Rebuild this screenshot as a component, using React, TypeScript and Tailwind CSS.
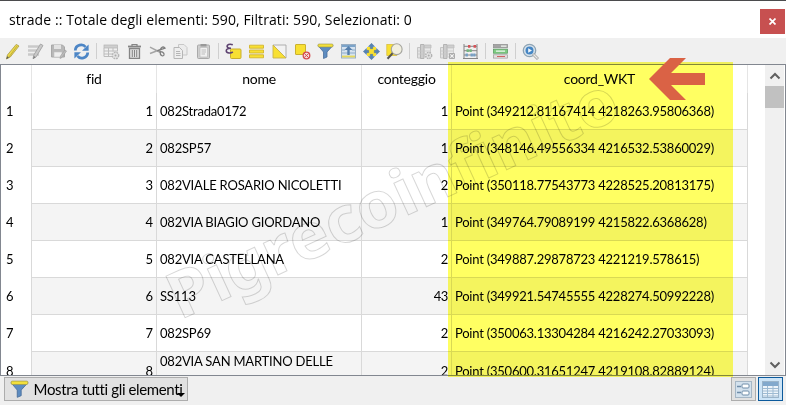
import type { ReactNode } from "react";

const rows = [
  ["1", "082Strada0172", "1", "Point (349212.81167414 4218263.95806368)"],
  ["2", "082SP57", "1", "Point (348146.49556334 4216532.53860029)"],
  ["3", "082VIALE ROSARIO NICOLETTI", "2", "Point (350118.77543773 4228525.20813175)"],
  ["4", "082VIA BIAGIO GIORDANO", "1", "Point (349764.79089199 4215822.6368628)"],
  ["5", "082VIA CASTELLANA", "2", "Point (349887.29878723 4221219.578615)"],
  ["6", "SS113", "43", "Point (349921.54745555 4228274.50992228)"],
  ["7", "082SP69", "2", "Point (350063.13304284 4216242.27033093)"],
  ["8", "082VIA SAN MARTINO DELLE", "2", "Point (350600.31651247 4219108.82889124)"],
];

function Ico({ children }: { children: ReactNode }) {
  return (
    <span className="flex w-[23px] shrink-0 justify-center">
      <svg width="17" height="17" viewBox="0 0 17 17" fill="none">{children}</svg>
    </span>
  );
}

const Sep = () => (
  <span className="flex w-[7px] shrink-0 justify-center">
    <span className="h-4 w-px bg-[#cfcfcf]" />
  </span>
);

const Funnel = () => (
  <>
    <path d="M1 2.5 L6.5 9 V15.5 L10 14 V9 L16 2.5Z" fill="#5d8cc0" stroke="#4a6f9c" strokeWidth=".8" />
    <rect x="1" y="1" width="15" height="3" rx="1" fill="#f3e03b" stroke="#9a9548" strokeWidth=".6" />
  </>
);

const FieldTable = () => (
  <>
    <path d="M1.5 4.5H7V15H1.5Z" fill="#e2e2e2" stroke="#c4c4c4" />
    <path d="M4.5 1.5H8V15.5H4.5Z" fill="#cdcdcd" stroke="#b4b4b4" />
    <path d="M8.5 2H15V5H8.5Z" fill="#cfcfcf" stroke="#bbb" strokeWidth=".8" />
    <path d="M8.5 5H14.5V14H8.5Z" fill="#e9e9e9" stroke="#c6c6c6" strokeWidth=".8" />
    <path d="M2 8H14M2 11H14" stroke="#c6c6c6" strokeWidth=".8" />
  </>
);

function Toolbar() {
  return (
    <div className="flex h-[26px] shrink-0 items-center bg-[#f0f0f0] pl-[1px]">
      <Ico>
        <path d="M12.2 1.4 L15 3 L6.3 14 L2.5 16 L3.4 12Z" fill="#ecd949" stroke="#a99b45" strokeWidth=".8" />
        <path d="M13.2 2.8L5 14" stroke="#b5a339" strokeWidth=".8" />
        <path d="M2.2 16.2L3.2 13.2L5 14.6Z" fill="#5e5e55" />
      </Ico>
      <Ico>
        <path d="M1 3.5H12M1 7.5H12M1 11.5H12" stroke="#c9c9c9" strokeWidth="2.6" />
        <path d="M13.5 1L16 2.5L9 14L6 15.7L6.8 12Z" fill="#c9c9c9" stroke="#9a9a9a" strokeWidth=".8" />
        <path d="M6 16L7 13L8.4 14.2Z" fill="#777" />
      </Ico>
      <Ico>
        <path d="M1.5 2H12.5L14.5 4V14H1.5Z" fill="#b8b8b8" stroke="#a8a8a8" />
        <path d="M4 2H11V6H4Z" fill="#e3e3e3" />
        <path d="M4 9H12V14H4Z" fill="#eeeeee" stroke="#c5c5c5" strokeWidth=".6" />
        <path d="M15 7L16.5 8L12 14.5L10 15.5L10.5 13Z" fill="#bcbcbc" stroke="#9c9c9c" strokeWidth=".6" />
      </Ico>
      <Ico>
        <path d="M2.3 7.5C2.5 1.5 10 .5 12.5 4" stroke="#4d86c6" strokeWidth="2.8" />
        <path d="M15.6 1.4V7.7H9Z" fill="#4d86c6" />
        <path d="M14.7 9.5C14.5 15.5 7 16.5 4.5 13" stroke="#4d86c6" strokeWidth="2.8" />
        <path d="M1.4 15.6V9.3H8Z" fill="#4d86c6" />
      </Ico>
      <Sep />
      <Ico>
        <rect x="1" y="2" width="13.5" height="3" fill="#cfcfcf" stroke="#b3b3b3" strokeWidth=".7" />
        <path d="M1 5V13.5H9M1 8H14M1 11H9M5.5 5V13.5M10 5V8.5M14.5 5V8.5" stroke="#bcbcbc" />
        <circle cx="12.5" cy="12.5" r="3.2" fill="#e3e3e3" stroke="#b5b5b5" strokeWidth="1.4" strokeDasharray="1.8 .8" />
        <circle cx="12.5" cy="12.5" r="1" fill="#aaa" />
      </Ico>
      <Ico>
        <path d="M6 3V1.5H11V3" stroke="#858585" strokeWidth="1.2" />
        <path d="M2 3.5H15" stroke="#858585" strokeWidth="1.8" />
        <path d="M3.5 5.5H13.5V15.3H3.5Z" fill="#e1e1e1" stroke="#858585" strokeWidth="1.3" />
        <path d="M6.3 7V14M8.5 7V14M10.7 7V14" stroke="#858585" />
      </Ico>
      <Ico>
        <path d="M1 4.2L11.5 9.5M1 10.5L11.5 6.5" stroke="#a5a5a5" strokeWidth="1.5" />
        <path d="M8 8L16 5.2C14.5 2.8 12 4.4 11.3 6.8M10.5 8.8C12 8.2 15.6 9.2 15 12C13.6 14 11 12.2 11.2 9.2" stroke="#7e7e7e" strokeWidth="1.3" />
      </Ico>
      <Ico>
        <path d="M6.5 1.5H12L15 4.5V12H6.5Z" fill="#ececec" stroke="#c8c8c8" />
        <path d="M2 4.5H7.5L10.5 7.5V15.5H2Z" fill="#eeeeee" stroke="#b6b6b6" />
        <path d="M4 8.5H8M4 10.5H8.5M4 12.5H8.5" stroke="#b5b5b5" />
      </Ico>
      <Ico>
        <rect x="2.5" y="2" width="12" height="13.5" rx="1" fill="#cfcfcf" stroke="#aaa" />
        <path d="M5 4.5H12.5V14H5Z" fill="#f0f0f0" stroke="#b5b5b5" strokeWidth=".6" />
        <rect x="5.5" y="1" width="6" height="2.5" fill="#999" />
        <path d="M6.5 7H11M6.5 9H11M6.5 11H10" stroke="#bdbdbd" />
      </Ico>
      <Sep />
      <Ico>
        <rect x="5.5" y="6" width="10.5" height="9.5" rx="1" fill="#f8e032" stroke="#c9ae2e" />
        <path d="M7.8 1.8C4.5 .5 1.7 1.8 2.2 3.7C2.5 5.2 4.7 5.2 6 5.2C3.3 5.2 1 6 1.3 8.1C1.6 10.5 6 10.6 7.8 8.9" stroke="#5d4270" strokeWidth="1.6" />
      </Ico>
      <Ico>
        <path d="M1.5 2.2H15.5V5.2H1.5ZM1.5 7H15.5V10H1.5ZM1.5 11.8H15.5V14.8H1.5Z" fill="#f8e032" stroke="#d2b42d" strokeWidth=".9" />
      </Ico>
      <Ico>
        <path d="M2 2H15V15Z" fill="#f2f2f2" stroke="#a6a6a6" strokeWidth=".9" />
        <path d="M2 2V15H15Z" fill="#f8e032" stroke="#c7b24d" strokeWidth=".9" />
      </Ico>
      <Ico>
        <rect x="1.5" y="1.5" width="10" height="10" rx=".5" fill="#f8e032" stroke="#cbb12e" />
        <circle cx="12.5" cy="12.5" r="3.3" fill="#f5dddd" stroke="#d44d50" strokeWidth="1.3" />
        <path d="M10.2 10.3L14.8 14.8M10.3 14.4L14.6 10.6" stroke="#d44d50" />
      </Ico>
      <Ico><Funnel /></Ico>
      <Ico>
        <rect x="1.5" y="1.5" width="14" height="13.5" fill="#d5e2ef" stroke="#98adc2" />
        <path d="M2 3H15" stroke="#7ba3c9" strokeWidth="2" />
        <path d="M2 13.5H15" stroke="#e6d95a" strokeWidth="1.8" />
        <path d="M2 7H5M12 7H15M2 10H15" stroke="#8cabc9" strokeWidth="1" />
        <path d="M8.5 3L12.5 7H9.7V12H7.3V7H4.5Z" fill="#557fad" />
      </Ico>
      <Ico>
        <rect x="4" y="4" width="9" height="9" fill="#f8e032" />
        <path d="M8.5 .3L11.6 3.5H9.7V5.7H7.3V3.5H5.4ZM8.5 16.7L5.4 13.5H7.3V11.3H9.7V13.5H11.6ZM.3 8.5L3.5 5.4V7.3H5.7V9.7H3.5V11.6ZM16.7 8.5L13.5 11.6V9.7H11.3V7.3H13.5V5.4Z" fill="#5583b4" stroke="#406a97" strokeWidth=".4" />
      </Ico>
      <Ico>
        <rect x=".8" y="1.5" width="10" height="11" fill="#f8e032" stroke="#d6ba35" strokeWidth=".7" />
        <circle cx="10.7" cy="6.2" r="5.4" fill="#f1efdf" stroke="#a4a49e" strokeWidth="1.1" />
        <path d="M6.6 10.2L1.5 15.7" stroke="#555" strokeWidth="2" />
      </Ico>
      <Sep />
      <Ico>
        <FieldTable />
        <circle cx="12.7" cy="12.5" r="3" fill="#e5e5e5" stroke="#b2b2b2" strokeWidth="1.4" strokeDasharray="1.6 .8" />
        <circle cx="12.7" cy="12.5" r="1" fill="#aaa" />
      </Ico>
      <Ico>
        <FieldTable />
        <rect x="10" y="10" width="6" height="6" rx="1" fill="#aaa" />
        <path d="M11.3 11.3L14.7 14.7M14.7 11.3L11.3 14.7" stroke="#f5f5f5" strokeWidth="1.1" />
      </Ico>
      <Ico>
        <path d="M2 1V16M15 1V16M1 15.5H16M2 3.3H15M2 7.7H15M2 12H15" stroke="#858585" />
        <path d="M6 3.3H8.4M11.5 3.3H14" stroke="#d55357" strokeWidth="2.8" />
        <path d="M4.5 7.7H10" stroke="#74b47e" strokeWidth="2.8" strokeDasharray="2.4 .5" />
        <path d="M3.5 12H6M8.5 12H13.5" stroke="#779fc4" strokeWidth="2.8" strokeDasharray="2.4 .3" />
      </Ico>
      <Sep />
      <Ico>
        <rect x="1.5" y="1.5" width="14" height="3.3" fill="#a4a4a4" stroke="#8c8c8c" strokeWidth=".7" />
        <rect x="1.5" y="6.2" width="14" height="4" fill="#7fcc83" stroke="#5b9f61" strokeWidth=".8" />
        <rect x="1.5" y="11.8" width="14" height="3.3" fill="#e7dede" stroke="#999" strokeWidth=".7" />
        <path d="M9 3.2H14.5M4 8.2H13" stroke="#f0f6f0" strokeWidth="1.3" />
        <path d="M5 13.5H13" stroke="#cf6264" />
      </Ico>
      <Sep />
      <Ico>
        <circle cx="7.5" cy="7.5" r="6.2" fill="#d9e4ec" stroke="#8da3b4" strokeWidth="1.3" />
        <circle cx="7.5" cy="7.5" r="4" fill="#4686c4" />
        <path d="M6.2 5.3L10 7.5L6.2 9.7Z" fill="#f3f7fa" />
        <path d="M11 11L16 16" stroke="#a6a6a6" strokeWidth="3" />
        <path d="M11.5 11.5L15.5 15.5" stroke="#e9e9e9" strokeWidth="1.2" />
      </Ico>
    </div>
  );
}

export default function App() {
  return (
    <div className="relative flex h-[405px] w-[786px] flex-col overflow-hidden bg-[#f0f0f0] font-[Lato,sans-serif] text-black">
      <div className="flex h-[38px] shrink-0 items-start justify-between border-t border-[#4b4b4d] bg-white pl-[9px] pr-[1px]">
        <span className="whitespace-pre pt-[8px] font-['Open_Sans',sans-serif] text-[14px] leading-[22px] tracking-[0.1px]">strade :: Totale degli elementi: 590, Filtrati: 590, Selezionati: 0</span>
        <span className="mt-[8px] flex h-[25px] w-[25px] items-center justify-center bg-[#c75050]">
          <svg width="7" height="7" viewBox="0 0 7 7"><path d="M.5 .5L6.5 6.5M6.5 .5L.5 6.5" stroke="white" strokeWidth="1.7" /></svg>
        </span>
      </div>
      <Toolbar />
      <div className="flex h-[312px] shrink-0 overflow-hidden border border-[#828790] bg-white text-[13px]">
        <div className="w-[764px] shrink-0">
          <div className="flex h-[28px] w-[747px] text-center text-[14px] leading-[27px] tracking-[-0.25px]">
            <div className="w-[31px] border-r border-[#e5e5e5]" />
            <div className="w-[125px] border-r border-[#e5e5e5]">fid</div>
            <div className="w-[205px] border-r border-[#e5e5e5]">nome</div>
            <div className="w-[90px] border-r border-[#e5e5e5]">conteggio</div>
            <div className="flex-1 border-r border-[#e5e5e5]">coord_WKT</div>
          </div>
          {rows.map(([id, name, count, point], i) => (
            <div key={id} className={`flex h-[37px] w-[747px] ${i === 7 ? "leading-[38px]" : "leading-[37px]"} ${i % 2 ? "bg-[#f4f4f4]" : "bg-white"}`}>
              <div className="w-[31px] border-r border-[#d9d9d9] bg-white pl-[5px]">{id}</div>
              <div className="w-[125px] border-r border-b border-[#d9d9d9] pr-[3px] text-right">{id}</div>
              <div className={`w-[205px] whitespace-nowrap border-r border-b border-[#d9d9d9] pl-[3px] tracking-[-0.2px] ${i === 7 ? "leading-[18px]" : ""}`}>{name}</div>
              <div className="w-[90px] border-r border-b border-[#d9d9d9] pr-[3px] text-right tracking-[-0.4px]">{count}</div>
              <div className="flex-1 whitespace-nowrap border-r border-b border-[#d9d9d9] pl-[3px] tracking-[-0.23px]">{point}</div>
            </div>
          ))}
        </div>
        <div className="flex w-[19px] shrink-0 flex-col items-center bg-[#f0f0f0]">
          <div className="flex h-[21px] items-center"><svg width="12" height="8" viewBox="0 0 12 8"><path d="M1.5 6.5L6 2L10.5 6.5" fill="none" stroke="#606060" strokeWidth="2" /></svg></div>
          <div className="h-[22px] w-full bg-[#c1c1c1]" />
          <div className="flex-1" />
          <div className="flex h-[21px] items-center"><svg width="12" height="8" viewBox="0 0 12 8"><path d="M1.5 1.5L6 6L10.5 1.5" fill="none" stroke="#606060" strokeWidth="2" /></svg></div>
        </div>
      </div>
      <div className="flex h-[29px] shrink-0 items-start pl-[4px] pr-[3px] pt-[1px]">
        <button className="flex h-[24px] w-[184px] items-center border border-[#adadad] bg-[#e1e1e1] pl-[5px]">
          <svg width="19" height="19" viewBox="0 0 17 17"><Funnel /></svg>
          <span className="ml-[4px] w-[150px] shrink-0 whitespace-nowrap text-[15px] leading-[22px] tracking-[-0.38px]">Mostra tutti gli elementi</span>
          <svg className="-ml-[6px] mt-3 shrink-0" width="8" height="5"><path d="M0 0H8L4 4Z" fill="black" /></svg>
        </button>
        <span className="ml-auto flex h-[24px] w-[25px] items-center justify-center border border-[#adadad] bg-[#e1e1e1]">
          <svg width="17" height="17" fill="none"><rect x=".5" y=".5" width="16" height="16" fill="#d3e1ed" stroke="#a5b6c5" /><path d="M2 5.5H6M2 11.5H6" stroke="#6f8da9" strokeWidth="1.5" /><rect x="7" y="3" width="7" height="4" rx="1" fill="white" stroke="#6f8da9" /><rect x="7" y="10" width="7" height="4" rx="1" fill="white" stroke="#6f8da9" /></svg>
        </span>
        <span className="ml-[2px] flex h-[24px] w-[25px] items-center justify-center border border-[#0c5a9c] bg-[#cce4f7]">
          <svg width="17" height="17" fill="none"><rect x=".5" y=".5" width="16" height="16" fill="#edf4fa" stroke="#9ab4ca" /><path d="M1 1H16V5H1Z" fill="#82a9cd" /><path d="M1 7.5H16M1 10H16M1 12.5H16M1 15H16M5.5 5V16M11 5V16" stroke="#9ebbd3" /></svg>
        </span>
      </div>
      <svg className="pointer-events-none absolute inset-0 mix-blend-multiply" width="786" height="405">
        <rect x="448" y="62" width="285" height="315" fill="#ffff62" />
        <text x="0" y="0" transform="translate(180 320) rotate(-24.7)" textLength="488" lengthAdjust="spacingAndGlyphs" className="font-['Noto_Sans',sans-serif] text-[64px] font-bold" fill="none" stroke="#000000" strokeOpacity=".16" strokeWidth="1">Pigrecoinfinito</text>
      </svg>
      <svg className="pointer-events-none absolute inset-0" width="786" height="405">
        <path d="M649 79L670 58H686L671 73H705V85H671L686 100H670Z" fill="#da6245" />
      </svg>
    </div>
  );
}
